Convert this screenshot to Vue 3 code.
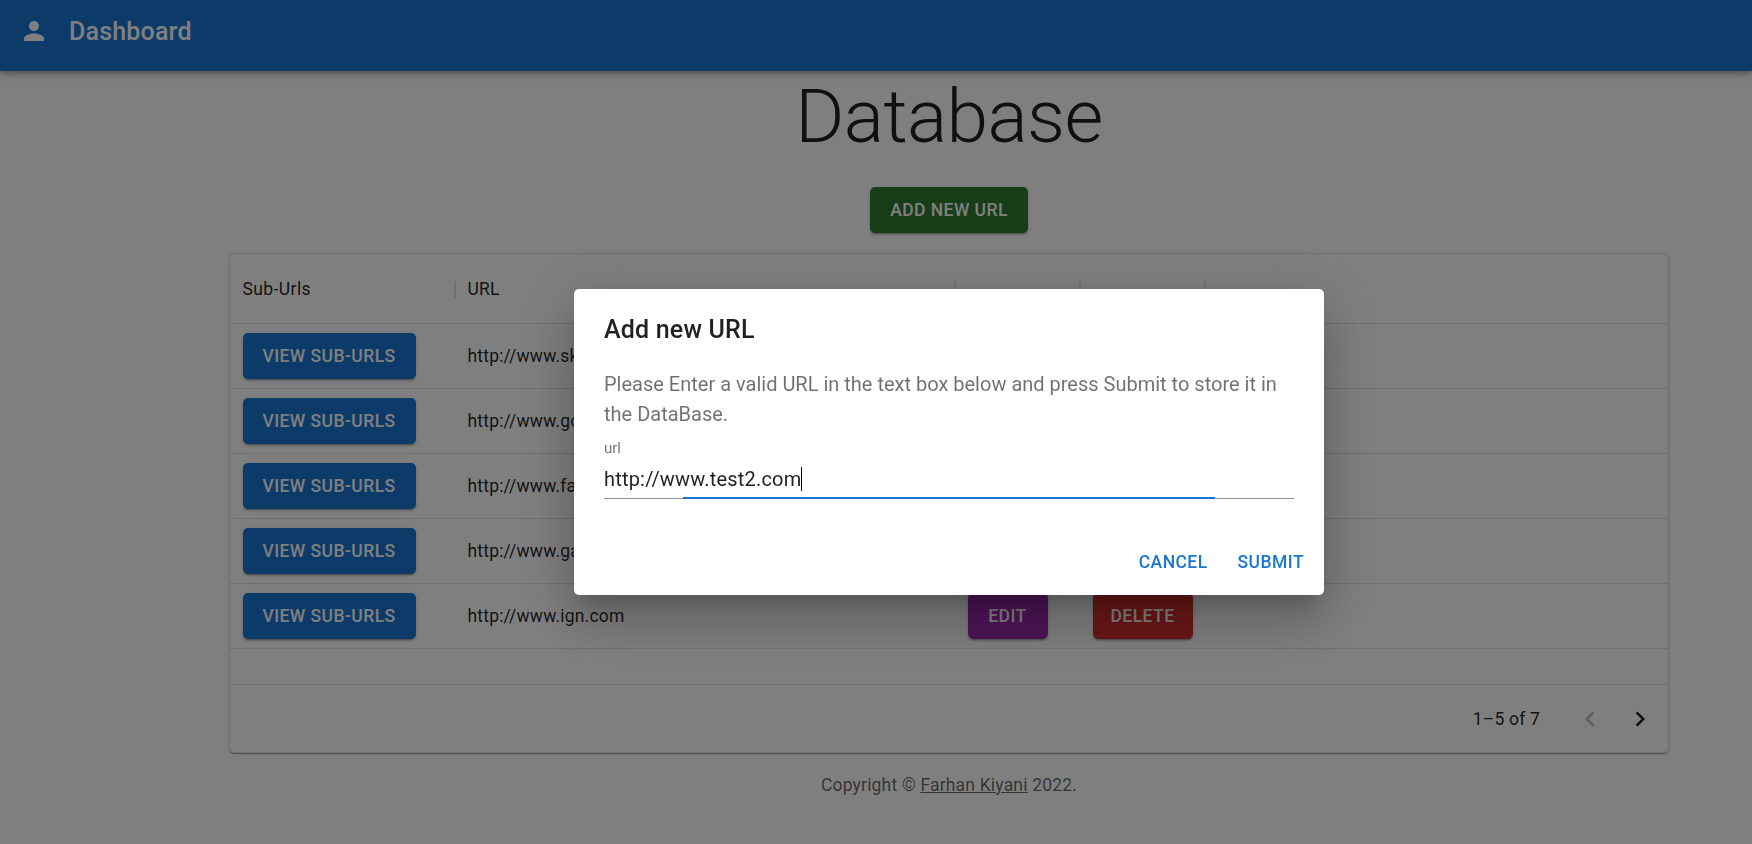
<template>
  <div class="page">
    <header class="app-bar">
      <svg class="person" viewBox="0 0 24 24"><path d="M12 12c2.21 0 4-1.79 4-4s-1.79-4-4-4-4 1.79-4 4 1.79 4 4 4zm0 2c-2.67 0-8 1.34-8 4v2h16v-2c0-2.66-5.33-4-8-4z" /></svg>
      <span class="brand">Dashboard</span>
    </header>

    <main class="content">
      <h2 class="title">Database</h2>
      <button class="btn green">Add new URL</button>

      <div class="grid">
        <div class="row head">
          <div class="col col-sub"><span class="head-label">Sub-Urls</span></div>
          <div class="col col-url"><span>URL</span></div>
          <div class="col col-edit"></div>
          <div class="col col-del"></div>
          <div class="col col-end"></div>
        </div>
        <div v-for="url in urls" :key="url" class="row">
          <div class="col col-sub"><button class="btn blue">View Sub-Urls</button></div>
          <div class="col col-url">{{ url }}</div>
          <div class="col col-edit"><button class="btn purple">Edit</button></div>
          <div class="col col-del"><button class="btn red">Delete</button></div>
          <div class="col col-end"></div>
        </div>
        <div class="row empty"></div>
        <div class="pager">
          <span class="count">1–5 of 7</span>
          <button class="arrow off">
            <svg viewBox="0 0 24 24"><path d="M15.41 16.59 10.83 12l4.58-4.59L14 6l-6 6 6 6 1.41-1.41z" /></svg>
          </button>
          <button class="arrow">
            <svg viewBox="0 0 24 24"><path d="M8.59 16.59 13.17 12 8.59 7.41 10 6l6 6-6 6-1.41-1.41z" /></svg>
          </button>
        </div>
      </div>

      <p class="copyright">Copyright © <a href="#">Farhan Kiyani</a> 2022.</p>
    </main>

    <div class="backdrop">
      <div class="dialog">
        <h3 class="dialog-title">Add new URL</h3>
        <div class="dialog-body">
          <p class="dialog-text">Please Enter a valid URL in the text box below and press Submit to store it in the DataBase.</p>
          <label class="field-label">url</label>
          <div class="field">
            <span class="field-value">http://www.test2.com</span><span class="caret"></span>
            <span class="focus-line"></span>
          </div>
        </div>
        <div class="dialog-actions">
          <button class="text-btn">Cancel</button>
          <button class="text-btn">Submit</button>
        </div>
      </div>
    </div>
  </div>
</template>

<script setup>
const urls = [
  'http://www.skysports.com',
  'http://www.google.com',
  'http://www.facebook.com',
  'http://www.gamespot.com',
  'http://www.ign.com'
]
</script>

<style>
html,
body {
  margin: 0;
  overflow: hidden;
}
</style>

<style scoped>
.page {
  height: 844px;
  background: #fff;
  font-family: Roboto, "Liberation Sans", sans-serif;
  color: rgba(0, 0, 0, 0.87);
}

.app-bar {
  display: flex;
  align-items: center;
  height: 62px;
  padding: 0 0 9px 19px;
  background: #1976d2;
  color: #fff;
  box-shadow: 0 2px 5px -1px rgba(0, 0, 0, 0.2), 0 5px 6px 0 rgba(0, 0, 0, 0.14), 0 1px 12px 0 rgba(0, 0, 0, 0.12);
  position: relative;
}

.person {
  width: 30px;
  height: 30px;
  fill: currentColor;
  margin-right: 20px;
}

.brand {
  font-size: 25px;
  font-weight: 500;
  letter-spacing: 0.19px;
}

.content {
  display: flex;
  flex-direction: column;
  align-items: center;
  padding-left: 146px;
}

.title {
  margin: 0;
  font-size: 75px;
  font-weight: 300;
  line-height: 90px;
  letter-spacing: -0.62px;
}

.btn {
  height: 46px;
  padding: 0;
  border: none;
  border-radius: 5px;
  color: #fff;
  font-family: inherit;
  font-size: 17.5px;
  font-weight: 500;
  letter-spacing: 0.44px;
  text-transform: uppercase;
  box-shadow: 0 3px 1px -2px rgba(0, 0, 0, 0.2), 0 2px 2px 0 rgba(0, 0, 0, 0.14), 0 1px 5px 0 rgba(0, 0, 0, 0.12);
}

.green {
  width: 158px;
  margin: 26px 0 20px;
  background: #2e7d32;
}

.blue {
  width: 173px;
  background: #1976d2;
}

.purple {
  width: 80px;
  background: #9c27b0;
}

.red {
  width: 100px;
  background: #d32f2f;
}

.grid {
  width: 1440px;
  box-sizing: border-box;
  border: 1px solid #e0e0e0;
  border-radius: 5px;
  box-shadow: 0 2px 1px -1px rgba(0, 0, 0, 0.2), 0 1px 1px 0 rgba(0, 0, 0, 0.14), 0 1px 3px 0 rgba(0, 0, 0, 0.12);
  font-size: 17.5px;
  letter-spacing: 0.19px;
}

.row {
  display: flex;
  height: 65px;
  box-sizing: border-box;
  border-bottom: 1px solid #e0e0e0;
}

.row.head {
  height: 70px;
}

.row.empty {
  height: 36px;
}

.head-label {
  letter-spacing: 0.4px;
}

.col {
  display: flex;
  align-items: center;
  box-sizing: border-box;
  padding: 0 12.5px;
  position: relative;
}

.col-sub {
  width: 225px;
}

.col-url {
  width: 500px;
}

.col-edit,
.col-del {
  width: 125px;
}

.col-end {
  flex: 1;
}

.head .col-sub::after,
.head .col-url::after,
.head .col-edit::after,
.head .col-del::after {
  content: "";
  position: absolute;
  right: -1px;
  top: 27px;
  width: 2px;
  height: 17px;
  background: #e0e0e0;
}

.pager {
  display: flex;
  align-items: center;
  justify-content: flex-end;
  height: 67px;
  padding-right: 3px;
}

.count {
  margin-right: 25px;
}

.arrow {
  display: flex;
  width: 50px;
  height: 50px;
  padding: 10px;
  border: none;
  background: none;
  color: rgba(0, 0, 0, 0.87);
}

.arrow.off {
  color: rgba(0, 0, 0, 0.26);
}

.arrow svg {
  width: 30px;
  height: 30px;
  fill: currentColor;
}

.copyright {
  margin: 20px 0 0;
  font-size: 17.5px;
  line-height: 25px;
  letter-spacing: 0.19px;
  color: rgba(0, 0, 0, 0.6);
}

.copyright a {
  color: inherit;
}

.backdrop {
  position: fixed;
  inset: 0;
  display: flex;
  justify-content: center;
  align-items: flex-start;
  box-sizing: border-box;
  padding: 289px 0 0 146px;
  background: rgba(0, 0, 0, 0.5);
}

.dialog {
  width: 750px;
  background: #fff;
  border-radius: 5px;
  box-shadow: 0 14px 19px -9px rgba(0, 0, 0, 0.2), 0 30px 48px 4px rgba(0, 0, 0, 0.14), 0 11px 58px 10px rgba(0, 0, 0, 0.12);
}

.dialog-title {
  margin: 0;
  padding: 21px 30px 19px;
  font-size: 25px;
  font-weight: 500;
  line-height: 40px;
  letter-spacing: 0.19px;
}

.dialog-body {
  padding: 0 30px 30px;
}

.dialog-text {
  margin: 0;
  font-size: 20px;
  line-height: 30px;
  color: rgba(0, 0, 0, 0.56);
}

.field-label {
  display: block;
  margin-top: 10px;
  font-size: 15px;
  line-height: 18px;
  color: rgba(0, 0, 0, 0.56);
}

.field {
  display: flex;
  align-items: center;
  position: relative;
  margin-top: 8px;
  height: 34px;
  box-sizing: border-box;
  padding-bottom: 5px;
  border-bottom: 1px solid rgba(0, 0, 0, 0.42);
  font-size: 20px;
  line-height: 30px;
  letter-spacing: 0.19px;
}

.caret {
  width: 1px;
  height: 24px;
  background: #000;
}

.focus-line {
  position: absolute;
  left: 79px;
  right: 79px;
  bottom: -1px;
  height: 2px;
  background: #1976d2;
}

.dialog-actions {
  display: flex;
  justify-content: flex-end;
  gap: 10px;
  padding: 10px;
}

.text-btn {
  height: 46px;
  padding: 0 10px;
  border: none;
  background: none;
  color: #1976d2;
  font-family: inherit;
  font-size: 17.5px;
  font-weight: 500;
  letter-spacing: 0.44px;
  text-transform: uppercase;
}
</style>
